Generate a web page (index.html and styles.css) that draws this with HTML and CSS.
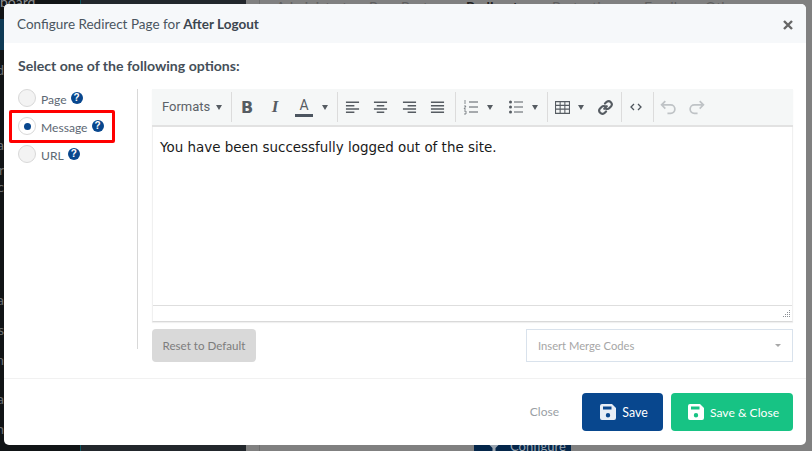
FILE: index.html
```html
<!DOCTYPE html>
<html lang="en">
<head>
<meta charset="utf-8">
<title>Configure Redirect Page</title>
<link rel="stylesheet" href="styles.css">
</head>
<body>
<div class="backdrop">
  <aside class="side">
    <div class="side-top">board</div>
    <div class="side-active"></div>
    <div class="side-item g12">d</div>
    <div class="side-item g59">a</div>
    <div class="side-item g9">r</div>
    <div class="side-item g1">c</div>
    <div class="side-item g97">a</div>
    <div class="side-item g14">s</div>
    <div class="side-item g14">m</div>
    <div class="side-item g23">a</div>
    <div class="side-item g14">n</div>
  </aside>
  <div class="panel"></div>
  <main class="page">
    <nav class="tabs"><span>Administrator</span><span>Pre</span><span>Post</span><span class="tab-on">Redirect</span><span>Protection</span><span>Email</span><span>Other</span></nav>
    <div class="page-btn"><svg class="page-ic" viewBox="0 0 12 8"><path d="M0 0h12L8 4v4H4V4z"/></svg>Configure</div>
  </main>
</div>

<section class="modal">
  <header class="modal-head">
    <h1 class="modal-title">Configure Redirect Page for <b>After Logout</b></h1>
    <svg class="modal-x" viewBox="0 0 10 10"><path d="M1 1l8 8M9 1l-8 8"/></svg>
  </header>

  <div class="modal-body">
    <p class="lead">Select one of the following options:</p>
    <div class="columns">
      <div class="options">
        <label class="opt"><span class="radio"></span><span class="opt-text">Page</span><span class="help">?</span></label>
        <label class="opt"><span class="radio radio-on"></span><span class="opt-text">Message</span><span class="help">?</span></label>
        <label class="opt"><span class="radio"></span><span class="opt-text">URL</span><span class="help">?</span></label>
        <span class="marker"></span>
      </div>

      <div class="main-col">
        <div class="editor">
          <div class="toolbar">
            <div class="group g-formats"><span class="formats">Formats</span><span class="caret"></span></div>
            <div class="group g-text">
              <span class="tb"><span class="glyph-b">B</span></span>
              <span class="tb"><span class="glyph-i">I</span></span>
              <span class="tb tb-a"><span class="glyph-a">A</span><span class="caret"></span></span>
            </div>
            <div class="group g-align">
              <span class="tb tb-al"><svg class="ic" viewBox="0 0 16 16"><path d="M1 2.500h14M1 6h9M1 9.500h14M1 13h9"/></svg></span>
              <span class="tb tb-al"><svg class="ic" viewBox="0 0 16 16"><path d="M1 2.500h14M4 6h8M1 9.500h14M4 13h8"/></svg></span>
              <span class="tb tb-al"><svg class="ic" viewBox="0 0 16 16"><path d="M1 2.500h14M6 6h9M1 9.500h14M6 13h9"/></svg></span>
              <span class="tb tb-al"><svg class="ic" viewBox="0 0 16 16"><path d="M1 2.500h14M1 6h14M1 9.500h14M1 13h14"/></svg></span>
            </div>
            <div class="group g-lists">
              <span class="tb tb-list"><svg class="ic thin" viewBox="0 0 16 16"><path d="M6 3h9M6 8h9M6 13h9"/><path class="mini" d="M2 1v4M1 7h2l-2 3h2M1 12h2M1 15h2M3 12v3"/></svg><span class="caret"></span></span>
              <span class="tb tb-list"><svg class="ic thin" viewBox="0 0 16 16"><path d="M6 3h9M6 8h9M6 13h9"/><circle class="dot" cx="2.500" cy="3" r="1.500"/><circle class="dot" cx="2.500" cy="8" r="1.500"/><circle class="dot" cx="2.500" cy="13" r="1.500"/></svg><span class="caret"></span></span>
            </div>
            <div class="group g-insert">
              <span class="tb tb-table"><svg class="ic-table" viewBox="0 0 14 12"><path d="M.5.500h13v11H.5zM.5 4h13M.5 7.500h13M4.800.500v11M9.200.500v11"/></svg><span class="caret"></span></span>
              <span class="tb"><svg class="ic-link" viewBox="0 0 16 16"><path d="M6.800 9.200 9.200 6.800M7.500 4.300l1.600-1.600a3 3 0 0 1 4.200 4.200l-1.600 1.600a3 3 0 0 1-3.400.6M8.500 11.700l-1.600 1.600a3 3 0 0 1-4.200-4.200l1.600-1.600a3 3 0 0 1 3.400-.6"/></svg></span>
            </div>
            <div class="group g-code">
              <span class="tb"><svg class="ic-code" viewBox="0 0 12 8"><path d="M4 1 1 4l3 3M8 1l3 3-3 3"/></svg></span>
            </div>
            <div class="group g-hist">
              <span class="tb"><svg class="ic-hist" viewBox="0 0 16 14"><path d="M5 1 1.500 4.500 5 8M2 4.500h8a4 4 0 0 1 0 8H7"/></svg></span>
              <span class="tb"><svg class="ic-hist" viewBox="0 0 16 14"><path d="M11 1l3.500 3.500L11 8M14 4.500H6a4 4 0 0 0 0 8h3"/></svg></span>
            </div>
          </div>
          <div class="content">You have been successfully logged out of the site.</div>
          <div class="status"><svg class="grip" viewBox="0 0 8 8"><path d="M7 0h1v1H7zM5 2h1v1H5zM7 2h1v1H7zM3 4h1v1H3zM5 4h1v1H5zM7 4h1v1H7zM1 6h1v1H1zM3 6h1v1H3zM5 6h1v1H5zM7 6h1v1H7z"/></svg></div>
        </div>
        <div class="under">
          <button class="btn-reset" type="button">Reset to Default</button>
          <div class="merge"><span>Insert Merge Codes</span><span class="caret caret-light"></span></div>
        </div>
      </div>
    </div>
  </div>

  <footer class="modal-foot">
    <span class="btn-close">Close</span>
    <button class="btn btn-save" type="button"><svg class="ic-save" viewBox="0 0 16 16"><path fill-rule="evenodd" d="M2 0h10l4 4v10a2 2 0 0 1-2 2H2a2 2 0 0 1-2-2V2a2 2 0 0 1 2-2zm1 2.500v3h8.500v-3zM8 9a2.200 2.200 0 1 0 0 4.400A2.200 2.200 0 0 0 8 9z"/></svg>Save</button>
    <button class="btn btn-saveclose" type="button"><svg class="ic-save" viewBox="0 0 16 16"><path fill-rule="evenodd" d="M2 0h10l4 4v10a2 2 0 0 1-2 2H2a2 2 0 0 1-2-2V2a2 2 0 0 1 2-2zm1 2.500v3h8.500v-3zM8 9a2.200 2.200 0 1 0 0 4.400A2.200 2.200 0 0 0 8 9z"/></svg>Save &amp; Close</button>
  </footer>
</section>
</body>
</html>
```
FILE: styles.css
```css
* { box-sizing: border-box; }
html, body { margin: 0; height: 100%; overflow: hidden; }
body { font-family: Lato, "Open Sans", "Liberation Sans", sans-serif; color: #4a5560; padding: 4px 6px 6px 4px; }

/* dimmed page behind the dialog */
.backdrop { position: absolute; inset: 0; display: flex; overflow: hidden; background: #808080; }
.side { width: 80px; background: #111416; color: #5e6366; font-size: 14px; display: flex; flex-direction: column; }
.side-top { height: 0; line-height: 4px; white-space: nowrap; color: #8a8d90; }
.side-active { margin-top: 19px; height: 31px; background: #0e3a55; }
.side-item { height: 16px; line-height: 16px; width: 4px; overflow: hidden; direction: rtl; color: #6a6e70; }
.g1 { margin-top: 1px; } .g9 { margin-top: 9px; } .g12 { margin-top: 12px; } .g14 { margin-top: 14px; }
.g23 { margin-top: 23px; } .g59 { margin-top: 59px; } .g97 { margin-top: 97px; }
.panel { width: 166px; background: #22272c; border-left: 1px solid #0e5560; }
.page { flex: 1; position: relative; display: flex; flex-direction: column; justify-content: space-between; }
.page::before { content: ""; position: absolute; left: 13px; top: 0; bottom: 0; width: 1px; background: #6f6f6f; }
.tabs { display: flex; margin-top: 0; padding-left: 30px; font-size: 14px; line-height: 14px; color: #5e5e5e; }
.tabs span { flex: none; white-space: nowrap; }
.tabs span:nth-child(1) { width: 93px; }
.tabs span:nth-child(2) { width: 32px; }
.tabs span:nth-child(3) { width: 65px; }
.tabs span:nth-child(4) { width: 86px; }
.tabs span:nth-child(5) { width: 92px; }
.tabs span:nth-child(6) { width: 61px; }
.tab-on { color: #222; font-weight: 700; }
.page-btn { width: 97px; height: 6px; margin-left: 228px; background: #04264a; color: #9aa5b0; font-size: 13px; line-height: 2px; padding-left: 14px; overflow: hidden; display: flex; gap: 10px; }
.page-ic { width: 12px; height: 6px; fill: #9aa5b0; flex: none; }

/* dialog */
.modal { position: relative; height: 441px; background: #fff; border-radius: 5px; display: flex; flex-direction: column; overflow: hidden; }
.modal-head { height: 39px; flex: none; background: #f6f8fa; display: flex; align-items: center; justify-content: space-between; padding: 0 13px; }
.modal-title { margin: 0; font-size: 13.500px; font-weight: 400; color: #4a5560; }
.modal-title b { font-weight: 700; color: #3c4650; }
.modal-x { width: 10px; height: 10px; fill: none; stroke: #666; stroke-width: 2.400; position: relative; top: 1px; }

.modal-body { flex: none; height: 336px; border-bottom: 1px solid #f1f1f1; padding: 14px 13px 0 14px; }
.lead { margin: 0; height: 32px; font-size: 14.100px; line-height: 17px; font-weight: 700; color: #454f59; }
.columns { display: flex; height: 260px; }
.options { position: relative; width: 120px; border-right: 1px solid #d8d8d8; display: flex; flex-direction: column; gap: 10px; }
.opt { display: flex; align-items: center; height: 18px; font-size: 12.100px; color: #5d6873; }
.opt-text { position: relative; top: 1px; }
.radio { width: 18px; height: 18px; border-radius: 50%; border: 1px solid #d8d8d8; background: #f3f3f3; margin-right: 5px; display: flex; align-items: center; justify-content: center; }
.radio-on { background: #fff; }
.radio-on::after { content: ""; width: 7px; height: 7px; border-radius: 50%; background: #08478e; }
.help { width: 12px; height: 12px; margin-left: 4px; border-radius: 50%; background: #08478e; color: #fff; font-size: 10px; line-height: 12px; text-align: center; font-weight: 700; font-family: "Liberation Sans", sans-serif; }
.marker { position: absolute; left: -9px; top: 21px; width: 106px; height: 33px; border: 3px solid #f00; border-radius: 2px; }

.main-col { flex: 1; padding-left: 14px; min-width: 0; }
.editor { height: 233px; border: 1px solid #f0f0f0; border-bottom: 1px solid #d9d9d9; box-shadow: 0 1px 1px rgba(0,0,0,.06); display: flex; flex-direction: column; }
.toolbar { height: 38px; flex: none; margin: -1px -1px 0; background: #f5f7f7; border-bottom: 2px solid #e2e2e2; display: flex; padding: 3px 0; color: #545b62; }
.group { display: flex; align-items: center; height: 30px; border-right: 1px solid #dcdcdc; }
.group:last-child { border-right: 0; }
.g-formats { width: 80px; padding-left: 10px; }
.g-text { width: 106px; padding-left: 1px; }
.g-align { width: 118px; }
.g-lists { width: 92px; }
.g-insert { width: 74px; }
.g-code { width: 32px; }
.formats { font-family: Roboto, "Liberation Sans", sans-serif; font-size: 13px; color: #5c6268; margin-right: 6px; position: relative; top: -1px; }
.caret { width: 0; height: 0; border-left: 3.500px solid transparent; border-right: 3.500px solid transparent; border-top: 5px solid #565c62; }
.tb { width: 28px; height: 30px; display: flex; align-items: center; justify-content: center; }
.tb-al { width: 28.500px; }
.tb-a { width: 48px; justify-content: flex-start; padding-left: 6px; gap: 9px; }
.tb-list { width: 45px; justify-content: flex-start; padding-left: 7px; gap: 8px; }
.tb-table { width: 43px; justify-content: flex-start; padding-left: 7px; gap: 8px; }
.glyph-b { font: 700 16px "DejaVu Sans", sans-serif; color: #565c62; }
.glyph-i { font: italic 700 17px "Liberation Serif", serif; color: #565c62; }
.glyph-a { width: 18px; text-align: center; font: 400 14px/17px Roboto, sans-serif; color: #565c62; border-bottom: 3px solid #4c5560; }
.ic { width: 15px; height: 15px; fill: none; stroke: #565c62; stroke-width: 1.600; }
.ic.thin { width: 16px; height: 16px; stroke-width: 1; }
.mini { stroke-width: .7; }
.dot { fill: #565c62; stroke: none; }
.ic-table { width: 15px; height: 13px; fill: none; stroke: #565c62; stroke-width: 1; }
.ic-link { width: 17px; height: 17px; fill: none; stroke: #565c62; stroke-width: 2; stroke-linecap: round; }
.ic-code { width: 12px; height: 8px; fill: none; stroke: #4e555c; stroke-width: 1.300; }
.ic-hist { width: 17px; height: 15px; fill: none; stroke: #bfc3c6; stroke-width: 1.600; }
.content { flex: 1; padding: 11px 7px; font: 13.450px/20px "DejaVu Sans", sans-serif; color: #1a1a1a; }
.status { height: 16px; flex: none; border-top: 1px solid #dedede; display: flex; justify-content: flex-end; align-items: center; padding-right: 2px; }
.grip { width: 8px; height: 8px; fill: #8a8f94; }

.under { display: flex; justify-content: space-between; margin-top: 7px; }
.btn-reset { width: 104px; height: 33px; border: 0; border-radius: 4px; background: #d9d9d9; color: #7d7d7d; font: 11.600px Lato, sans-serif; padding: 0; }
.merge { width: 267px; height: 33px; border: 1px solid #d9e2ec; display: flex; align-items: center; justify-content: space-between; padding: 0 11px; font-size: 11.200px; color: #a6a6a6; }
.caret-light { border-top-color: #a8a8a8; border-left-width: 3px; border-right-width: 3px; border-top-width: 3px; }

.modal-foot { flex: 1; display: flex; align-items: flex-start; justify-content: flex-end; padding: 14px 13px 0 0; gap: 8px; }
.btn-close { font-size: 12px; color: #9a9fa5; line-height: 38px; margin-right: 15px; }
.btn { height: 38px; border: 0; border-radius: 4px; color: #fff; display: flex; align-items: center; justify-content: center; gap: 6px; font: 12.400px Lato, sans-serif; padding: 0 0 0 3px; }
.btn-save { width: 81px; background: #08478e; }
.btn-saveclose { width: 122px; background: #17c384; font-size: 12.100px; }
.ic-save { width: 16px; height: 16px; fill: #e6edf5; }
.btn-saveclose .ic-save { fill: #fff; }
```
